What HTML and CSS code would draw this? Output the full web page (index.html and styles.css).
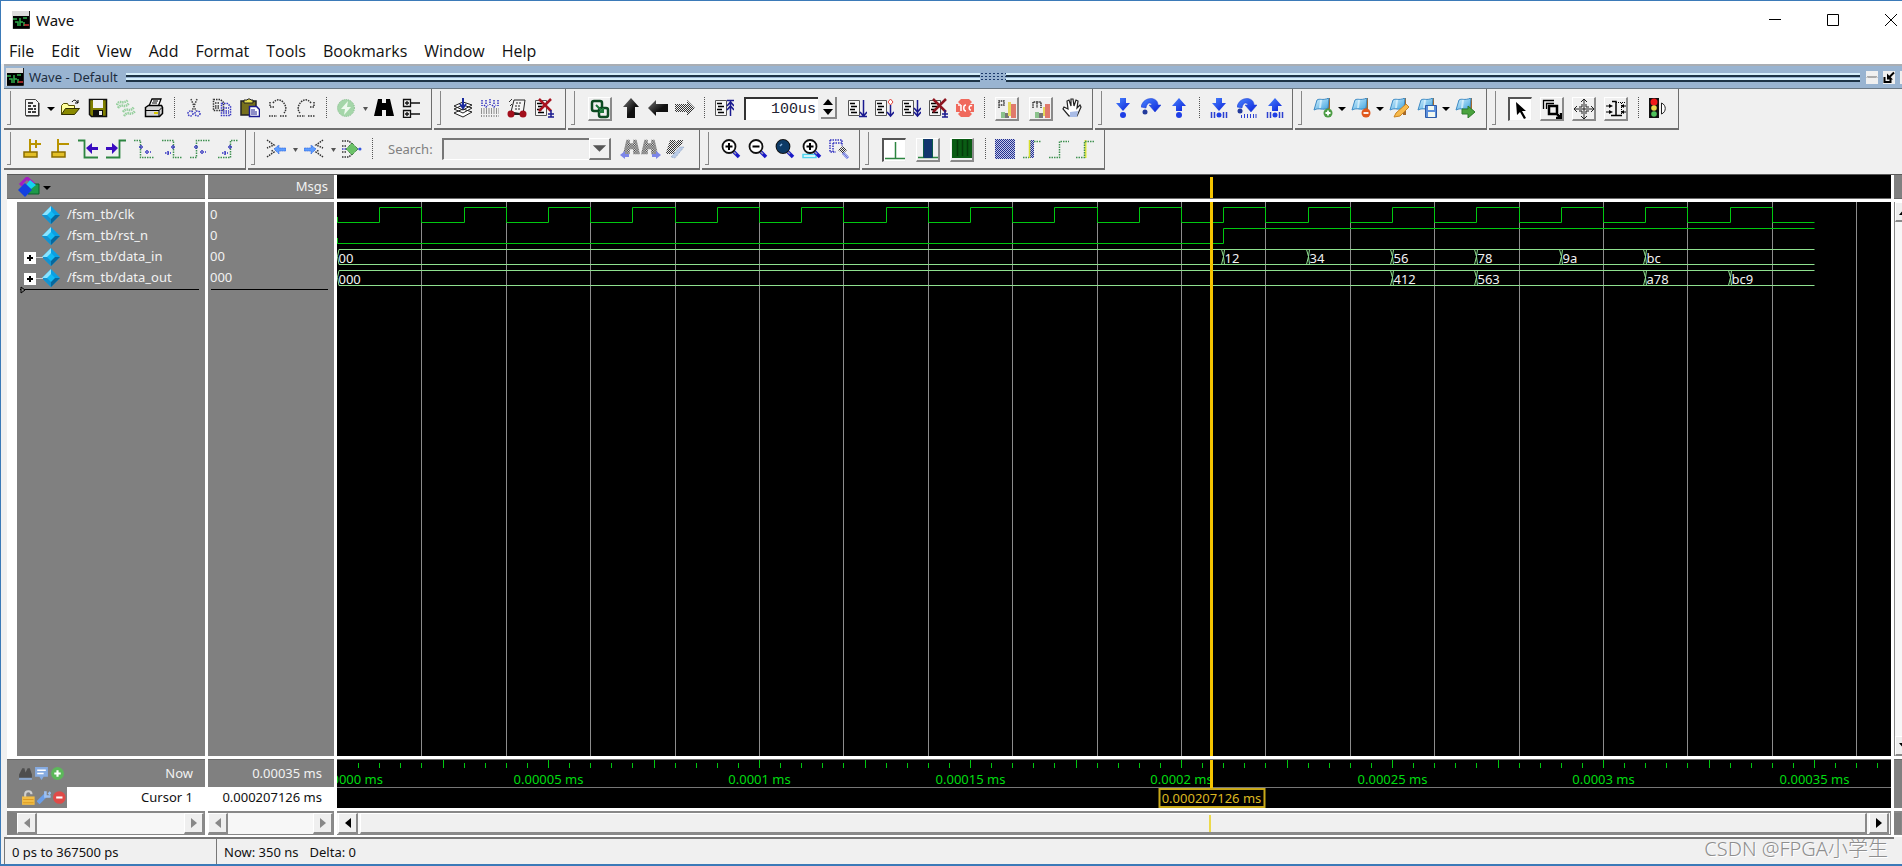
FILE: index.html
```html
<!DOCTYPE html>
<html lang="en">
<head>
<meta charset="utf-8">
<title>Wave</title>
<link rel="stylesheet" href="styles.css">
</head>
<body>
<svg class="defs" aria-hidden="true">
  <defs>
    <pattern id="dither" width="2" height="2" patternUnits="userSpaceOnUse"><rect width="2" height="2" fill="#efefef"/><rect width="1" height="1" fill="#333"/><rect x="1" y="1" width="1" height="1" fill="#333"/></pattern>
    <pattern id="ditherBlue" width="2" height="2" patternUnits="userSpaceOnUse"><rect width="2" height="2" fill="#c4c8ec"/><rect width="1" height="1" fill="#22308c"/><rect x="1" y="1" width="1" height="1" fill="#22308c"/></pattern>
    <linearGradient id="dark" x1="0" y1="0" x2="1" y2="1"><stop offset="0" stop-color="#777"/><stop offset=".6" stop-color="#111"/></linearGradient>
    <linearGradient id="blue" x1="0" y1="0" x2="1" y2="1"><stop offset="0" stop-color="#4a86ff"/><stop offset="1" stop-color="#0a20d8"/></linearGradient>
    <linearGradient id="sky" x1="0" y1="0" x2="1" y2="1"><stop offset="0" stop-color="#d6f2ff"/><stop offset="1" stop-color="#3fa3de"/></linearGradient>
    <symbol id="app" viewBox="0 0 18 18"><rect width="18" height="18" fill="#dcdcdc"/><rect x="1" y="5" width="16" height="12" fill="#000"/><path d="M17.500 0v17.500H1" fill="none" stroke="#222"/><path d="M1 8h4M3 11h3v4M8 15V7M8 11h3M11 7h4M12 11v4" fill="none" stroke="#2fae4c" stroke-width="1.500"/><path d="M12 14h5" stroke="#c33" stroke-width="1.500"/></symbol>
    <symbol id="page" viewBox="0 0 20 20"><path d="M1.500 2.500h11v15h-11z" fill="#f6f6f6" stroke="#555"/><path d="M3 5.500h5M4 8.500h6M3 11.500h5M4 14.500h6" stroke="#000" stroke-width="1.500"/></symbol>
    <symbol id="caret" viewBox="0 0 10 20"><path d="M1 9h8l-4 4z" fill="#000"/></symbol>
    <symbol id="caretSmall" viewBox="0 0 10 20"><path d="M3 9h5l-2.500 4z" fill="#555"/></symbol>
    <symbol id="down" viewBox="0 0 20 20"><path d="M7 0h6v5h4l-7 8-7-8h4z" fill="url(#blue)"/></symbol>
    <symbol id="up" viewBox="0 0 20 20"><path d="M7 13h6V8h4l-7-8-7 8h4z" fill="url(#blue)"/></symbol>
    <symbol id="over" viewBox="0 0 20 20"><path d="M0 9C2-2 17-2 17 7h3l-6 7-6-7h3C10 4 6 4 5 10z" fill="url(#blue)" stroke="#1b3ad0" stroke-width=".5"/></symbol>
    <symbol id="lens" viewBox="0 0 20 20"><path d="M12 12l6 6" stroke="#1a1ac8" stroke-width="3.500"/><path d="M12 12l3 3" stroke="#9a9ab0" stroke-width="1.500"/><circle cx="8" cy="7.500" r="6.500" fill="#fff" stroke="#111" stroke-width="1.800"/></symbol>
    <symbol id="flag" viewBox="0 0 20 20"><path d="M15.500 0v17" stroke="#a3692c" stroke-width="3"/><path d="M4 2c3-2 5 1 12-2l-1 10c-6 3-8-1-14 2z" fill="url(#sky)" stroke="#3d8ac4"/><path d="M8 2l-1 8" stroke="#e8f8ff" stroke-width="2" opacity=".7"/></symbol>
    <symbol id="binos" viewBox="0 0 20 20"><path d="M4 1h4v4h4V1h4l4 17h-8v-6H8v6H0z"/></symbol>
    <symbol id="gem" viewBox="0 0 18 18"><path d="M9 0l9 9-9 9-9-9z" fill="#0aa0e4"/><path d="M9 0v9H0z" fill="#8be4ff"/><path d="M0 9h9v9z" fill="#1592cf"/><path d="M18 9H9v9z" fill="#07679c"/><path d="M9 5l4 4-4 4-4-4z" fill="#10baf4"/></symbol>
    <symbol id="left" viewBox="0 0 12 14"><path d="M9 2v10L3 7z"/></symbol>
    <symbol id="right" viewBox="0 0 12 14"><path d="M3 2v10l6-5z"/></symbol>
  </defs>
</svg>

<div class="window">
  <header class="titlebar">
    <svg class="app-icon"><use href="#app"/></svg>
    <h1 class="title">Wave</h1>
    <div class="window-controls">
      <button aria-label="Minimize"><svg viewBox="0 0 14 14"><path d="M1 6.500h12"/></svg></button>
      <button aria-label="Maximize"><svg viewBox="0 0 14 14"><path d="M1.500 1.500h11v11h-11z"/></svg></button>
      <button aria-label="Close"><svg viewBox="0 0 14 14"><path d="M1 1l12 12M13 1L1 13"/></svg></button>
    </div>
  </header>

  <nav class="menubar">
    <button>File</button><button>Edit</button><button>View</button><button>Add</button><button>Format</button><button>Tools</button><button>Bookmarks</button><button>Window</button><button>Help</button>
  </nav>

  <div class="pane-title">
    <svg class="app-icon"><use href="#app"/></svg>
    <h2>Wave - Default</h2>
    <div class="rails"></div>
    <div class="rail-grip"></div>
    <div class="rails rails-end"></div>
    <button aria-label="Shade pane"><svg viewBox="0 0 12 12"><path d="M1 6l1-1 1 1 1-1 1 1 1-1 1 1 1-1 1 1 1-1 1 1" fill="none" stroke="#555"/></svg></button>
    <button aria-label="Dock pane"><svg viewBox="0 0 12 12"><path d="M1.500 5.500v5h6v-3M11 1L6 6" fill="none" stroke="#000" stroke-width="2"/><path d="M4 2v6h6z"/></svg></button>
    <button class="cut" aria-label="Close pane"></button>
  </div>

  <div class="toolbars">
    <div class="tool-row">
      <div class="group wide g-file">
        <button aria-label="New"><svg viewBox="0 0 20 20"><path d="M3.500 1.500h10l3 3v13h-13z" fill="#f6f6f6" stroke="#444"/><path d="M17 5v13H4" fill="none" stroke="#222"/><path d="M6 5h5M6 8h3M11 8h3M6 11h5M12 11h2M6 14h3M10 14h4" stroke="#000" stroke-width="1.300"/></svg></button>
        <button class="drop" aria-label="New options"><svg><use href="#caret"/></svg></button>
        <button aria-label="Open"><svg viewBox="0 0 20 20"><path d="M1.500 16.500v-9l2-2h4l1 2h6v3" fill="#ffff9c" stroke="#555000"/><path d="M1.500 16.500l4-6h14l-5 6z" fill="#8a8a00" stroke="#333000"/><path d="M12 4c2-3 4-2 6 1M15 5h3V2" fill="none" stroke="#000"/></svg></button>
        <button aria-label="Save"><svg viewBox="0 0 20 20"><path d="M1.500 1.500h17v17h-15l-2-2z" fill="#808000" stroke="#111" stroke-width="1.500"/><path d="M5 2h10v8H5z" fill="#f4f4f4"/><path d="M5 12h10v6H5z" fill="#111"/><path d="M11 13h3v4h-3z" fill="#eee"/></svg></button>
        <button aria-label="Reload"><svg viewBox="0 0 20 20"><path d="M1 7C3 1 7 7 12 2M2 10c4-6 6 2 11-5M7 14c4-6 6 2 11-5M8 18c4-6 6 1 11-5" fill="none" stroke="#95cf9d" stroke-width="2.500" stroke-dasharray="1.500 .7"/></svg></button>
        <button aria-label="Print"><svg viewBox="0 0 20 20"><path d="M5 8l3-7h9l-3 8" fill="#fff" stroke="#000" stroke-width="1.300"/><path d="M1.500 9.500l3-2h13l1 2v6l-3 3h-14z" fill="#d6d6d6" stroke="#000" stroke-width="1.500"/><path d="M2 12.500h13l3-3M15 12v6" fill="none" stroke="#000"/><path d="M9 3h5M8 5h5" stroke="#000"/><path d="M10 15h4" stroke="#d8c800" stroke-width="2"/></svg></button>
        <span class="sep"></span>
        <button aria-label="Cut"><svg viewBox="0 0 20 20"><path d="M7 1l5 12M13 1L8 13" fill="none" stroke="#444" stroke-width="1.500" stroke-dasharray="1.500 1"/><circle cx="6.500" cy="15.500" r="2.500" class="dash-blue"/><circle cx="13.500" cy="15.500" r="2.500" class="dash-blue"/></svg></button>
        <button aria-label="Copy"><svg viewBox="0 0 20 20"><path d="M1.500 1.500h7l3 3v8h-10zM3 5h5M3 8h5M3 10h5" class="dash-dark"/><path d="M9.500 5.500h6l3 3v9h-9zM11 10h6M11 13h6M11 15h6" class="dash-blue"/></svg></button>
        <button aria-label="Paste"><svg viewBox="0 0 20 20"><path d="M1 3h15v14H1z" fill="#77701c" stroke="#222" stroke-width="1.500"/><path d="M4 5V2h3l1-1h2l1 1h2v3z" fill="#e8e050" stroke="#222"/><path d="M9.500 8.500h7l3 3v7h-10z" fill="#fff" stroke="#1a1a90" stroke-width="1.500"/><path d="M11 12h4M11 14h6M11 16h6" stroke="#1a1a90"/></svg></button>
        <button aria-label="Undo"><svg viewBox="0 0 20 20"><path d="M2 4v5h5M5 5C8 1 12 1 15 4s4 8 1 11M1 18h8M12 18h7" class="dash-dark"/></svg></button>
        <button aria-label="Redo"><svg viewBox="0 0 20 20"><path d="M18 4v5h-5M15 5C12 1 8 1 5 4s-4 8-1 11M1 18h8M12 18h7" class="dash-dark"/></svg></button>
        <span class="sep"></span>
        <button aria-label="Compile"><svg viewBox="0 0 20 20"><circle cx="10" cy="10" r="8.500" fill="#a5d6a9" stroke="#83bd8a" stroke-dasharray="1 1"/><path d="M12 3L5 11h4l-1 6 7-8h-4z" fill="#effaef"/></svg></button>
        <button class="drop" aria-label="Compile options"><svg><use href="#caretSmall"/></svg></button>
        <button aria-label="Find"><svg><use href="#binos"/></svg></button>
        <button aria-label="Collapse tree"><svg viewBox="0 0 20 20"><path d="M1.500 1.500h7v7h-7zM1.500 12.500h7v7h-7zM8 5h10M8 16h10M3 5h4M5 3v4M3 16h4M5 14v4" fill="none" stroke="#111" stroke-width="1.300"/></svg></button>
      </div>
      <div class="group g-lib">
        <button aria-label="Load layers"><svg viewBox="0 0 20 20"><path d="M1 15l9-4 9 3-9 5zM1 11l9-4 9 3-9 5zM1 8l9-4 9 3-9 5z" fill="#fff" stroke="#222"/><path d="M10 0v9M7 6l3 4 3-4" stroke="#1a2a9c" fill="none" stroke-width="2"/></svg></button>
        <button aria-label="Simulate"><svg viewBox="0 0 20 20"><path d="M2 2v6M6 2v5M10 1v6M14 2v5M18 2v6M4 7l2 2 2-2M12 7l2 2 2-2" class="dash-blue"/><path d="M1 11h18M1 13h18M1 15h18M1 18h18" stroke="#333" stroke-dasharray="1 1.500" fill="none"/></svg></button>
        <button aria-label="Coverage"><svg viewBox="0 0 20 20"><path d="M4 14L7 2h11l-2 14z" fill="#f4f4f4" stroke="#222"/><path d="M9 5h6M8 8h6M8 11h5" stroke="#222" stroke-dasharray="2 1"/><path d="M2 4l3-3M3 8l2-2" stroke="#333"/><path d="M4 16h13" stroke="#222" stroke-width="2"/><circle cx="4" cy="16" r="3.500" fill="#a30f1c"/><circle cx="16" cy="16" r="3.500" fill="#a30f1c"/></svg></button>
        <button aria-label="End simulation"><svg viewBox="0 0 20 20"><use href="#page" width="20" height="20"/><path d="M5 1l12 12M17 1L5 13" stroke="#a81420" stroke-width="2.500"/><path d="M17 12v7M14 16h6M14 19h6" stroke="#1a1a90" stroke-width="1.500"/></svg></button>
      </div>
      <div class="group g-run">
        <button class="raised" aria-label="Environment"><svg viewBox="0 0 20 20"><rect x="2" y="2" width="10" height="10" rx="2" fill="none" stroke="#0d4a22" stroke-width="2.500"/><rect x="9" y="9" width="9" height="9" rx="2" fill="#efefef" stroke="#0d4a22" stroke-width="2.500"/><path d="M6 6l7 7M13 9v4H9" fill="none" stroke="#1f7a3c" stroke-width="2"/></svg></button>
        <button aria-label="Up"><svg viewBox="0 0 20 20"><path d="M10 0l8 9h-4v11H6V9H2z" fill="url(#dark)"/></svg></button>
        <button aria-label="Back"><svg viewBox="0 0 20 20"><path d="M0 10l8-8v4h12v8H8v4z" fill="url(#dark)"/></svg></button>
        <button aria-label="Forward"><svg viewBox="0 0 20 20"><path d="M20 10l-8-8v4H0v8h12v4z" fill="url(#dither)"/></svg></button>
        <span class="sep"></span>
        <button aria-label="Restart"><svg viewBox="0 0 20 20"><use href="#page" width="20" height="20"/><path d="M16.500 2v16M13 2.500h7M13 8l3.500-4L20 8M13 12l3.500-4 3.500 4" fill="none" stroke="#1a1a90" stroke-width="1.500"/></svg></button>
        <input class="run-length" type="text" value="100us" aria-label="Run length">
        <span class="spinner"><button aria-label="Increase"><svg viewBox="0 0 14 9"><path d="M2 8h10L7 2z"/></svg></button><button aria-label="Decrease"><svg viewBox="0 0 14 9"><path d="M2 2h10L7 8z"/></svg></button></span>
        <button aria-label="Run"><svg viewBox="0 0 20 20"><use href="#page" width="20" height="20"/><path d="M16.500 2v16M13 14l3.500 4 3.500-4M12 18.500h8" fill="none" stroke="#1a1a90" stroke-width="1.500"/></svg></button>
        <button aria-label="Continue run"><svg viewBox="0 0 20 20"><use href="#page" width="20" height="20"/><path d="M16.500 7v11M13 14l3.500 4 3.500-4" fill="none" stroke="#1a1a90" stroke-width="1.500"/><path d="M16.500 1l2.500 3-2.500 3L14 4z" fill="#fff" stroke="#e0453a"/></svg></button>
        <button aria-label="Run all"><svg viewBox="0 0 20 20"><use href="#page" width="20" height="20"/><path d="M16.500 2v16M13 10l3.500 4 3.500-4M13 14l3.500 4 3.500-4" fill="none" stroke="#1a1a90" stroke-width="1.500"/></svg></button>
        <button aria-label="Break"><svg viewBox="0 0 20 20"><use href="#page" width="20" height="20"/><path d="M5 1l13 13M18 1L5 14" stroke="#8e1520" stroke-width="2.500"/><path d="M17 12v7M14 16h6M14 19h6" stroke="#1a1a90" stroke-width="1.500"/></svg></button>
        <button aria-label="Stop"><svg viewBox="0 0 20 20"><path d="M6 1h8l3 3-2 2h4v8h-4l2 2-3 3H6l-3-3 2-2H1V6h4L3 4z" fill="#f0695c"/><path d="M3 7h3M6 7v6M11 7c-3 0-3 6 0 6M17 8c-3-2-4 4-1 4" stroke="#fff" fill="none" stroke-width="1.500"/></svg></button>
        <span class="sep"></span>
        <button class="raised" aria-label="Profile performance"><svg viewBox="0 0 20 20"><path d="M2 9V2h5v4H2" fill="none" stroke="#333" stroke-width="1.500" stroke-dasharray="1.500 .7"/><path d="M4 19v-6h4v6z" fill="#8bc28c"/><path d="M8 19v-5h4v5z" fill="#777"/><path d="M11 17V3h3v14z" fill="#e5d95a"/><path d="M14 19V5h5v14z" fill="#e07a6c"/></svg></button>
        <button class="raised" aria-label="Profile memory"><svg viewBox="0 0 20 20"><path d="M2 9V3h4v6M6 3h4v6" fill="none" stroke="#333" stroke-width="1.500" stroke-dasharray="1.500 .7"/><path d="M4 19v-6h4v6z" fill="#8bc28c"/><path d="M8 19v-5h4v5z" fill="#777"/><path d="M12 17V8h2v9z" fill="#e5d95a"/><path d="M14 19V5h5v14z" fill="#e07a6c"/></svg></button>
        <button aria-label="Edit breakpoints"><svg viewBox="0 0 20 20"><path d="M7 18l-6-7 1-2 4 2-1-8 2-1 2 6V1h2l1 7 2-6 2 1-1 7 3-3 1 2-4 9z" fill="#fff" stroke="#222" stroke-width="1.200"/><path d="M8 19v-5l8-1-1 6z" fill="#a9bce6"/></svg></button>
      </div>
      <div class="group wide g-step">
        <button aria-label="Step into"><svg viewBox="0 0 20 20"><use href="#down" width="20" height="20"/><circle cx="10" cy="17" r="3" fill="#1f3fe6"/></svg></button>
        <button aria-label="Step over"><svg viewBox="0 0 20 20"><use href="#over" width="20" height="20"/><circle cx="4" cy="14" r="2.500" fill="#223a9c"/></svg></button>
        <button aria-label="Step out"><svg viewBox="0 0 20 20"><use href="#up" width="20" height="20"/><circle cx="10" cy="17" r="3" fill="#1f3fe6"/></svg></button>
        <span class="sep"></span>
        <button aria-label="Step into instance"><svg viewBox="0 0 20 20"><use href="#down" width="20" height="20"/><circle cx="10" cy="17" r="2.500" fill="#1f3fe6"/><path d="M2.500 14v6M5.500 14v6M14.500 14v6M17.500 14v6" stroke="#2b3fd0" stroke-width="1.500"/></svg></button>
        <button aria-label="Step over instance"><svg viewBox="0 0 20 20"><use href="#over" width="20" height="20"/><circle cx="3" cy="13" r="2.500" fill="#223a9c"/><path d="M4.500 17v3M7.500 16v4M10.500 16v4M13.500 16v4M16.500 16v4M19 16v4" stroke="#2b3fd0"/></svg></button>
        <button aria-label="Step out instance"><svg viewBox="0 0 20 20"><use href="#up" width="20" height="20"/><circle cx="10" cy="17" r="2.500" fill="#1f3fe6"/><path d="M2.500 14v6M5.500 14v6M14.500 14v6M17.500 14v6" stroke="#2b3fd0" stroke-width="1.500"/></svg></button>
      </div>
      <div class="group wide g-mark">
        <button aria-label="Add bookmark"><svg viewBox="0 0 20 20"><use href="#flag" width="20" height="20"/><circle cx="15" cy="15" r="4.500" fill="#4c9c44"/><path d="M12.500 15h5M15 12.500v5" stroke="#fff" stroke-width="1.800"/></svg></button>
        <button class="drop" aria-label="Add bookmark options"><svg><use href="#caret"/></svg></button>
        <button aria-label="Delete bookmark"><svg viewBox="0 0 20 20"><use href="#flag" width="20" height="20"/><circle cx="15" cy="15" r="4.500" fill="#e0581c"/><path d="M12.500 15h5" stroke="#fff" stroke-width="1.800"/></svg></button>
        <button class="drop" aria-label="Delete bookmark options"><svg><use href="#caret"/></svg></button>
        <button aria-label="Edit bookmarks"><svg viewBox="0 0 20 20"><use href="#flag" width="20" height="20"/><path d="M17 6l3 3-9 9-6 1 2-4z" fill="#f7ba4c" stroke="#c98422"/></svg></button>
        <button aria-label="Save bookmarks"><svg viewBox="0 0 20 20"><use href="#flag" width="20" height="20"/><path d="M8.500 7.500h11v12h-11z" fill="#5b8edb" stroke="#2d5ca8"/><path d="M11 8h6v4h-6zM11 14h7v5h-7z" fill="#f2f8f0"/></svg></button>
        <button class="drop" aria-label="Save bookmark options"><svg><use href="#caret"/></svg></button>
        <button aria-label="Next bookmark"><svg viewBox="0 0 20 20"><use href="#flag" width="20" height="20"/><path d="M7 11h6V8l7 6-7 6v-4H7z" fill="#4aa33e" stroke="#2f7d2c"/></svg></button>
      </div>
      <div class="group g-modes">
        <button class="raised sunken" aria-label="Select mode"><svg viewBox="0 0 20 20"><path d="M5 2l10 9h-4l4 7-2 1-4-7-3 3z"/></svg></button>
        <button class="raised" aria-label="Zoom mode"><svg viewBox="0 0 20 20"><path d="M1.500 10V1.500H12M4.500 10V4.500H12" fill="none" stroke="#000" stroke-width="1.300"/><path d="M7 7h8v8H7zM14 14l5 5M19 14v5h-5" fill="none" stroke="#000" stroke-width="2.500"/></svg></button>
        <button class="raised" aria-label="Pan mode"><svg viewBox="0 0 20 20"><path d="M10 0v20M0 10h20M7 3l3-3 3 3M7 17l3 3 3-3M3 7l-3 3 3 3M17 7l3 3-3 3M8 5v3H5M12 5v3h3M8 15v-3H5M12 15v-3h3" fill="none" stroke="#222"/></svg></button>
        <button class="raised" aria-label="Edit mode"><svg viewBox="0 0 20 20"><path d="M6 2.500h4v14H5M10 16.500h6" fill="none" stroke="#000" stroke-width="1.500"/><path d="M10 3.500h9M15.500 4v12" fill="none" stroke="#000" stroke-dasharray="1 1"/><path d="M0 7h4M0 13h4M15 7h5M15 13h5" stroke="#000"/><path d="M3 5l4 2-4 2zM3 11l4 2-4 2zM18 5v4l-3-2zM18 11v4l-3-2z"/></svg></button>
        <span class="sep"></span>
        <button aria-label="Stop drawing"><svg viewBox="0 0 20 20"><rect x="1" y="0" width="10" height="20" fill="#111"/><circle cx="6" cy="4" r="3.500" fill="#f01a1a"/><circle cx="6" cy="10" r="2.800" fill="#e8d84c"/><circle cx="6" cy="16" r="2.800" fill="#4fc25c"/><path d="M13.500 5c5 2 5 9 0 11z" fill="#fff" stroke="#222"/></svg></button>
      </div>
    </div>

    <div class="tool-row">
      <div class="group wide g-cursor">
        <button aria-label="Insert cursor"><svg viewBox="0 0 20 20"><path d="M8 0v13M8 5h11M14 1v8" stroke="#b99400" stroke-width="2" fill="none"/><path d="M2 13h13v5H2z" fill="#e3bf28" stroke="#8a6d00" stroke-width="1.500"/></svg></button>
        <button aria-label="Delete cursor"><svg viewBox="0 0 20 20"><path d="M8 0v13M8 5h11" stroke="#b99400" stroke-width="2" fill="none"/><path d="M2 13h13v5H2z" fill="#e3bf28" stroke="#8a6d00" stroke-width="1.500"/></svg></button>
        <button aria-label="Previous transition"><svg viewBox="0 0 20 20"><path d="M0 1.500h6.500v17H20" fill="none" stroke="#2c8540" stroke-width="1.800"/><path d="M8 9l6-5v4h6v3h-6v4z" fill="#3a0cc0"/></svg></button>
        <button aria-label="Next transition"><svg viewBox="0 0 20 20"><path d="M0 18.500h13.500v-17H20" fill="none" stroke="#2c8540" stroke-width="1.800"/><path d="M12 9L6 4v4H0v3h6v4z" fill="#3a0cc0"/></svg></button>
        <button aria-label="Previous falling edge"><svg viewBox="0 0 20 20"><path d="M0 1.500h6.500v17H20" class="dash-green"/><path d="M5 8h4M7 6v5M11 13h6M13 11v4" class="dash-blue"/></svg></button>
        <button aria-label="Next falling edge"><svg viewBox="0 0 20 20"><path d="M0 1.500h11.500v17H20" class="dash-green"/><path d="M9 8h5M11 6v5M3 14h6M6 12v4" class="dash-blue"/></svg></button>
        <button aria-label="Previous rising edge"><svg viewBox="0 0 20 20"><path d="M0 18.500h6.500v-17H20" class="dash-green"/><path d="M4 8h5M6 6v5M10 13h6M12 11v4" class="dash-blue"/></svg></button>
        <button aria-label="Next rising edge"><svg viewBox="0 0 20 20"><path d="M0 18.500h12.500v-17H20" class="dash-green"/><path d="M10 8h5M12 6v5M4 14h6M7 12v4" class="dash-blue"/></svg></button>
      </div>
      <div class="group wide g-search">
        <button aria-label="Expand previous"><svg viewBox="0 0 20 20"><path d="M1 1l7 5-7 3M1 18l7-5-3-2" class="dash-dark"/><path d="M8 10l5-4v3h7v3h-7v3z" fill="#5c9cff" stroke="#2e62d8" stroke-dasharray="1 1"/></svg></button>
        <button class="drop" aria-label="Expand previous options"><svg><use href="#caretSmall"/></svg></button>
        <button aria-label="Expand next"><svg viewBox="0 0 20 20"><path d="M19 1l-7 5 7 3M19 18l-7-5 3-2" class="dash-dark"/><path d="M12 10L7 6v3H0v3h7v3z" fill="#5c9cff" stroke="#2e62d8" stroke-dasharray="1 1"/></svg></button>
        <button class="drop" aria-label="Expand next options"><svg><use href="#caretSmall"/></svg></button>
        <button aria-label="Show drivers"><svg viewBox="0 0 20 20"><path d="M0 2h7l4 4M0 18h7l4-4M0 7h4M0 13h4" class="dash-dark"/><path d="M0 10h20" class="dash-blue"/><path d="M10 4l6 6-6 6-6-6z" fill="#6cc268" stroke="#25682a" stroke-dasharray="1 1"/><circle cx="18" cy="10" r="1.500" fill="#3456e0"/></svg></button>
        <span class="sep"></span>
        <label class="search-label" for="search">Search:</label>
        <input class="search-box" id="search" type="text">
        <button class="combo" aria-label="Search history"><svg viewBox="0 0 20 20"><path d="M3 7h14l-7 7z" fill="#555"/></svg></button>
        <button class="slim" aria-label="Find previous"><svg viewBox="0 0 20 20"><use href="#binos" width="17" height="17" x="3" fill="url(#dither)"/><path d="M0 16l5-4v3h4v3H5v2z" fill="#7c86e8"/></svg></button>
        <button class="slim" aria-label="Find next"><svg viewBox="0 0 20 20"><use href="#binos" width="17" height="17" fill="url(#dither)"/><path d="M20 16l-5-4v3h-4v3h4v2z" fill="#7c86e8"/></svg></button>
        <button aria-label="Search options"><svg viewBox="0 0 20 20"><path d="M1 14L5 1h6l-1 4 3-4h5l-1 4-6 5-2 5H1z" fill="url(#dither)"/><path d="M6 18l9-10h4l-9 11z" fill="#b9cbe6" stroke="#8fa4c4" stroke-dasharray="1 1"/></svg></button>
      </div>
      <div class="group g-zoom">
        <button aria-label="Zoom in"><svg viewBox="0 0 20 20"><use href="#lens" width="20" height="20"/><path d="M4.500 7.500h7M8 4v7" stroke="#000" stroke-width="2"/></svg></button>
        <button aria-label="Zoom out"><svg viewBox="0 0 20 20"><use href="#lens" width="20" height="20"/><path d="M4.500 7.500h7" stroke="#000" stroke-width="2"/></svg></button>
        <button aria-label="Zoom full"><svg viewBox="0 0 20 20"><use href="#lens" width="20" height="20"/><circle cx="8" cy="7.500" r="6.500" fill="#0d3a66"/><path d="M5 7l2-2" stroke="#8ab4dd" stroke-width="1.500"/></svg></button>
        <button aria-label="Zoom in on cursor"><svg viewBox="0 0 20 20"><path d="M1 15.500h13v3H1z" fill="#fff" stroke="#4fd4ee" stroke-width="1.500"/><use href="#lens" width="20" height="20"/><path d="M4.500 7.500h7M8 4v7" stroke="#000" stroke-width="2"/></svg></button>
        <button aria-label="Zoom between cursors"><svg viewBox="0 0 20 20"><path d="M1 1h12v6M1 1v12h6M4 4h9M4 4v9" class="dash-blue"/><path d="M9 11l5-4 4 4-4 4z" fill="url(#dither)"/><path d="M14 14l5 5" stroke="#5d6ae0" stroke-width="3" stroke-dasharray="1 .5"/></svg></button>
      </div>
      <div class="group g-edges">
        <button class="raised sunken" aria-label="Event mode"><svg viewBox="0 0 20 20"><path d="M0 18.500h20M10.500 2v16" stroke="#2c8540" stroke-width="1.500"/></svg></button>
        <button class="raised" aria-label="Delta mode"><svg viewBox="0 0 20 20"><path d="M0 18.500h20" stroke="#2c8540" stroke-width="1.500"/><path d="M5 0h10v19H5z" fill="#12366e"/><path d="M5.500 0v19M14.500 0v19" stroke="#0c5a4a"/></svg></button>
        <button class="raised" aria-label="Expanded mode"><svg viewBox="0 0 20 20"><path d="M0 0h20v19H0z" fill="#0a5c14"/><path d="M5.500 1v16M10.500 1v16M15.500 1v16" stroke="#063a0b" stroke-width="1.500"/></svg></button>
        <span class="sep"></span>
        <button aria-label="Expand all time"><svg viewBox="0 0 20 20"><path d="M0 0h20v20H0z" fill="url(#ditherBlue)"/></svg></button>
        <button aria-label="Expand at cursor"><svg viewBox="0 0 20 20"><path d="M1 18.500h6M12 2.500h7" class="dash-green"/><path d="M7 1h5v18H7z" fill="url(#ditherBlue)"/><path d="M7.500 1v18" stroke="#d7df2c" stroke-width="1.500"/></svg></button>
        <button aria-label="Collapse all time"><svg viewBox="0 0 20 20"><path d="M0 18.500h10.500v-16H20" class="dash-green"/></svg></button>
        <button aria-label="Collapse at cursor"><svg viewBox="0 0 20 20"><path d="M9.500 1v18" stroke="#e2e83c" stroke-width="2"/><path d="M0 18.500h8.500v-16H19" class="dash-green"/></svg></button>
      </div>
    </div>
  </div>

  <main class="panes">
    <section class="col names">
      <div class="head"><button class="objects" aria-label="Object filter"><svg viewBox="0 0 22 20"><path d="M3 7l6-6 6 5-6 6z" fill="none" stroke="#a21fc0" stroke-width="3"/><path d="M10 7h11v10H10z" fill="#1e9a4a" stroke="#0c5e2a"/><path d="M12 3l6 5-5 4-5-4z" fill="#16d2ee"/><path d="M7 6l7 7-7 7-7-7z" fill="#1440e0"/></svg><svg class="tri"><use href="#caret"/></svg></button></div>
      <div class="body">
        <ul class="signals">
          <li><svg class="gem"><use href="#gem"/></svg>/fsm_tb/clk</li>
          <li><svg class="gem"><use href="#gem"/></svg>/fsm_tb/rst_n</li>
          <li class="bus"><button class="plus" aria-label="Expand data_in"></button><svg class="gem"><use href="#gem"/></svg>/fsm_tb/data_in</li>
          <li class="bus"><button class="plus" aria-label="Expand data_out"></button><svg class="gem"><use href="#gem"/></svg>/fsm_tb/data_out</li>
        </ul>
        <div class="insert"><svg viewBox="0 0 6 8"><path d="M1 1l4 3-4 3z" fill="#808080" stroke="#000"/></svg></div>
      </div>
      <div class="time">
        <div class="time-row now">
          <span class="tools">
            <svg viewBox="0 0 14 14"><path d="M1 8l3-6h2l1 4 2-4h2l2 6v4H1z" fill="#4e4e4e"/><path d="M1 12h12" stroke="#8aa6cc" stroke-width="2"/></svg><svg viewBox="0 0 14 14"><path d="M1 1h12v9H9l-2 3-2-3H1z" fill="#86abe0"/><path d="M3 4h8M3 7h6" stroke="#fff" stroke-width="1.500"/></svg><svg viewBox="0 0 14 14"><circle cx="7" cy="7" r="6" fill="#5cb85a"/><path d="M4 7h6M7 4v6" stroke="#fff" stroke-width="2"/></svg>
          </span><span>Now</span></div>
        <div class="time-row cursor">
          <span class="tools">
            <svg viewBox="0 0 14 14"><path d="M4 7V4c0-4 6-4 6 0" fill="none" stroke="#d0d0d0" stroke-width="2"/><path d="M1 6h12v8H1z" fill="#f2bd45"/><path d="M2 9h10M2 12h10" stroke="#dc9a22"/></svg><svg viewBox="0 0 14 14"><path d="M1 12l7-7" stroke="#6a9ee8" stroke-width="4"/><path d="M8 1v5h5M13 2l-2 2" fill="none" stroke="#9cc0f2" stroke-width="2.500"/></svg><svg viewBox="0 0 14 14"><circle cx="7" cy="7" r="6" fill="#e04a48"/><path d="M4 7h6" stroke="#fff" stroke-width="2"/></svg>
          </span><span class="field">Cursor 1</span></div>
      </div>
      <div class="scroll"><button aria-label="Scroll names left"><svg><use href="#left"/></svg></button><span class="track"></span><button aria-label="Scroll names right"><svg><use href="#right"/></svg></button></div>
    </section>

    <section class="col values">
      <div class="head">Msgs</div>
      <div class="body">
        <ul class="signals"><li>0</li><li>0</li><li>00</li><li>000</li></ul>
        <div class="insert"></div>
      </div>
      <div class="time">
        <div class="time-row now"><span>0.00035 ms</span></div>
        <div class="time-row cursor"><span class="field">0.000207126 ms</span></div>
      </div>
      <div class="scroll"><button aria-label="Scroll values left"><svg><use href="#left"/></svg></button><span class="track"></span><button aria-label="Scroll values right"><svg><use href="#right"/></svg></button></div>
    </section>

    <section class="col wave">
      <div class="head"><svg id="wave-head"></svg></div>
      <div class="body"><svg id="wave-body"></svg></div>
      <div class="time"><svg id="wave-time"></svg></div>
      <div class="scroll live"><button aria-label="Scroll wave left"><svg><use href="#left"/></svg></button><span class="thumb"><i class="mark"></i></span><button aria-label="Scroll wave right"><svg><use href="#right"/></svg></button></div>
    </section>

    <section class="col edge">
      <div class="head"></div>
      <div class="body"><button aria-label="Scroll up"><svg viewBox="0 0 16 16"><path d="M3 11h10L8 5z"/></svg></button><button aria-label="Scroll down"><svg viewBox="0 0 16 16"><path d="M3 5h10l-5 6z"/></svg></button></div>
      <div class="time"></div>
      <div class="scroll"></div>
    </section>
  </main>

  <footer class="status">
    <span class="cell range">0 ps to 367500 ps</span>
    <span class="cell now-cell"><span>Now: 350 ns</span><span>Delta: 0</span></span>
  </footer>
  <div class="watermark">CSDN @FPGA小学生</div>
</div>
<script src="wave.js"></script>
</body>
</html>
```
FILE: styles.css
```css
* { box-sizing: border-box; }
body {
  margin: 0;
  font-family: "Noto Sans", "Open Sans", sans-serif;
  font-size: 13px;
  color: #111;
}
h1, h2, ul { margin: 0; padding: 0; font-size: 13px; font-weight: 400; list-style: none; }
button { border: 0; padding: 0; background: none; font: inherit; color: inherit; }
.defs { position: absolute; width: 0; height: 0; }

.window {
  position: relative;
  display: flex;
  flex-direction: column;
  height: 100vh;
  overflow: hidden;
  background: #f0f0f0;
  border: 1px solid #3b7ab8;
  border-width: 1px 0 2px 1px;
}

/* Title and menus */
.titlebar { display: flex; align-items: center; height: 37px; padding-left: 11px; background: #fff; flex: none; }
.app-icon { width: 18px; height: 18px; flex: none; }
.title { margin-left: 6px; font-size: 15px; }
.window-controls { display: flex; gap: 44px; margin-left: auto; padding-right: 4px; }
.window-controls button { display: flex; }
.window-controls svg { width: 14px; height: 14px; fill: none; stroke: #000; }
.menubar { display: flex; align-items: center; gap: 17px; height: 26px; padding-left: 8px; background: #fff; font-family: "Open Sans", "Noto Sans", sans-serif; font-size: 16px; flex: none; }

.pane-title {
  display: flex;
  align-items: center;
  height: 25px;
  margin-left: 3px;
  padding-left: 2px;
  background: #99b4d1;
  border-top: 2px solid #a9aeb4;
  border-bottom: 1px solid #6a7884;
  flex: none;
}
.pane-title h2 { margin: 0 8px 0 5px; white-space: nowrap; color: #1c2c3e; }
.rails { flex: 853; height: 9px; background: linear-gradient(#d6effb 0 2px, #1d3346 2px 4px, #99b4d1 4px 5px, #d6effb 5px 7px, #1d3346 7px 9px); }
.rails-end { margin-right: 6px; }
.rail-grip { width: 26px; height: 10px; background: radial-gradient(#1d3b6c 1px, transparent 1px) 0 0 / 4px 3px; }
.pane-title button { display: flex; width: 12px; height: 13px; margin-right: 5px; background: #f0f0f0; overflow: hidden; }
.pane-title button.cut { width: 2px; margin: 0; }

/* Toolbars */
.toolbars { margin-left: 3px; height: 85px; flex: none; }
.tool-row { display: flex; gap: 2px; height: 41px; }
.tool-row + .tool-row { height: 40px; }
.group {
  position: relative;
  display: flex;
  align-items: center;
  padding: 0 7px 1px 15px;
  border: 1px solid #6e6e6e;
  border-width: 0 1px 2px 0;
  flex: none;
}
.group::before {
  content: "";
  position: absolute;
  left: 3px;
  top: 2px;
  bottom: 3px;
  width: 3px;
  border: 1px solid #888;
  border-width: 0 1px 1px 0;
}
.group > button { display: flex; justify-content: center; align-items: center; width: 27px; }
.group.wide { padding-left: 14px; }
.group.wide > button { width: 28px; }
.group > button > svg { width: 20px; height: 20px; }
.group > button.drop { width: 10px; }
.group > button.drop > svg { width: 10px; }
.group.wide > button.drop { width: 10px; }
.group.wide > button.slim { width: 21px; }
.group > button.raised {
  width: 24px;
  height: 24px;
  margin: 2px 5px 0;
  border: 1px solid #fff;
  border-width: 1px 2px 2px 1px;
  border-right-color: #8a8a8a;
  border-bottom-color: #8a8a8a;
}
.group > button.sunken { background: #fff; border-width: 2px 1px 1px 2px; border-color: #555 #eee #eee #555; }
.g-modes > button.raised { margin: 2px 4px 0; }
.sep { width: 12px; height: 22px; background: repeating-linear-gradient(#555 0 1px, transparent 1px 2px) center / 1px 100% no-repeat; }
.g-file, .g-edges { padding-right: 5px; }
.group.g-step, .g-cursor { padding-right: 3px; }
.g-lib { padding-right: 8px; }
.g-search { padding-right: 10px; }

.dash-blue, .dash-dark, .dash-green { fill: none; stroke-width: 1.5; stroke-dasharray: 1.5 1; }
.dash-blue { stroke: #3434c0; }
.dash-dark { stroke: #333; }
.dash-green { stroke: #3f9150; }

.run-length {
  width: 74px;
  height: 23px;
  margin-left: 7px;
  padding: 0 2px;
  border: 1px solid #eee;
  border-width: 2px 0 0 2px;
  border-color: #333;
  background: #fff;
  font-family: "Liberation Mono", monospace;
  font-size: 15px;
  text-align: right;
  color: #223;
}
.spinner { display: flex; flex-direction: column; width: 16px; height: 22px; margin: 0 6px 0 3px; border: 1px solid #fff; border-width: 0 2px 2px 0; border-color: #888; }
.spinner button { display: flex; height: 10px; }
.spinner svg { width: 14px; height: 9px; }
.search-label { margin-left: 10px; width: 54px; color: #808080; }
.search-box { width: 147px; height: 22px; background: #efefef; border: 1px solid #fff; border-width: 2px 0 1px 2px; border-color: #777 #fff #fff #777; }
.group.wide > button.combo { width: 22px; height: 22px; margin-right: 8px; border: 1px solid #fff; border-width: 1px 2px 2px 1px; border-color: #fff #777 #777 #fff; }

/* Panes */
.panes { display: flex; flex: 1; min-height: 0; margin-left: 6px; border-top: 1px solid #5a5a5a; background: #fff; gap: 3px; }
.col { display: flex; flex-direction: column; gap: 3px; padding-bottom: 2px; flex: none; }
.head { height: 24px; background: #808080; border-bottom: 1px solid #6a6a6a; }
.body { flex: 1; min-height: 0; background: #808080; }
.time { height: 49px; background: #808080; border-top: 1px solid #6a6a6a; }
.scroll { display: flex; height: 24px; background: #f7f7f7; border: 1px solid #888; border-width: 2px 1px 1px 0; }
.names { width: 198px; }
.values { width: 126px; }
.wave { flex: 1; min-width: 0; }
.edge { width: 8px; overflow: hidden; }

.names .head { display: flex; align-items: center; padding-left: 11px; }
.objects { display: flex; align-items: center; }
.objects svg { width: 22px; height: 20px; }
.objects .tri { width: 10px; margin-left: 2px; }
.values .head { padding-right: 6px; text-align: right; line-height: 23px; color: #f2f2f2; }
.names .body { border-left: 10px solid #fff; }
.signals { padding-top: 2px; color: #f2f2f2; }
.signals li { display: flex; align-items: center; height: 21px; line-height: 21px; }
.names li { position: relative; padding-left: 25px; }
.gem { width: 18px; height: 18px; margin-right: 7px; }
.bus::before { content: ""; position: absolute; left: 18px; top: 11px; width: 8px; border-top: 1px solid #d0d0d0; }
.plus {
  position: absolute;
  left: 7px;
  top: 6px;
  width: 12px;
  height: 12px;
  background:
    linear-gradient(#000, #000) center / 6px 2px no-repeat,
    linear-gradient(#000, #000) center / 2px 6px no-repeat,
    #fff;
}
.values .signals { padding-left: 2px; }
.insert { display: flex; align-items: center; height: 1px; margin: 1px 6px 0 3px; background: #000; }
.insert svg { width: 6px; height: 8px; flex: none; overflow: visible; }

.time-row { display: flex; align-items: stretch; justify-content: flex-end; height: 27px; line-height: 27px; padding-right: 12px; color: #f2f2f2; }
.time-row.cursor { height: 21px; line-height: 21px; padding-right: 0; color: #111; }
.field { flex: 1; background: #fff; text-align: right; padding-right: 12px; }
.tools { display: flex; align-items: center; gap: 1px; width: 60px; padding-left: 11px; margin-right: auto; }
.cursor .tools { padding-left: 14px; }
.tools svg { width: 15px; height: 15px; }

.scroll button { display: flex; align-items: center; justify-content: center; width: 20px; background: #efefef; border: 1px solid #fff; border-width: 1px 2px 2px 1px; border-color: #fff #8a8a8a #8a8a8a #fff; }
.scroll svg { width: 12px; height: 14px; fill: #888; }
.names .scroll { border-left: 10px solid #808080; }
.track { flex: 1; }
.live { padding: 0 1px; gap: 2px; }
.live svg { fill: #000; }
.thumb { position: relative; flex: 1; background: #f0f0f0; border: 1px solid #fff; border-width: 1px 2px 2px 1px; border-color: #fff #8a8a8a #8a8a8a #fff; }
.mark { position: absolute; left: 56.4%; top: 1px; bottom: 0; width: 2px; background: #ecd94a; }

.wave .head, .wave .body, .wave .time { background: #000; overflow: hidden; }
.wave .head svg, .wave .body svg, .wave .time svg { display: block; width: 100%; height: 100%; }
.grid { stroke: #8c8c8c; }
.bit { fill: none; stroke: #00c810; }
.vec { fill: none; stroke: #8fe08f; }
.val { fill: #f2f2f2; }
.tick { stroke: #00c810; }
.stamp { fill: #00dc10; text-anchor: middle; }
.stamp-end { fill: #00dc10; text-anchor: end; }
.rule { stroke: #777; }
.cursor-line { stroke: #f5c400; stroke-width: 3; }
.cursor-box { fill: #000; stroke: #c8a818; stroke-width: 2; }
.cursor-text { fill: #dcb820; text-anchor: middle; }

.edge .body { display: flex; flex-direction: column; justify-content: space-between; background: #f7f7f7; border-left: 1px solid #888; }
.edge .body button { width: 18px; height: 20px; border: 1px solid #fff; border-bottom: 2px solid #888; background: #efefef; }
.edge .body svg { width: 16px; height: 16px; display: block; }
.edge .scroll { background: #808080; }

/* Status bar */
.status { display: flex; height: 27px; margin: 0 8px 0 3px; border-top: 2px solid #777; flex: none; }
.cell { display: flex; align-items: center; gap: 11px; padding-left: 7px; border-left: 1px solid #777; }
.range { width: 212px; }
.now-cell { flex: 1; }
.watermark {
  position: absolute;
  right: 14px;
  bottom: 1px;
  font-family: "Noto Sans", "Noto Sans CJK SC", sans-serif;
  font-size: 20px;
  font-weight: 300;
  line-height: 28px;
  color: #8e8e8e;
  text-shadow: 1px 1px #fff;
}
```
FILE: wave.js
```js
const NS = "http://www.w3.org/2000/svg";
const SCALE = 4.22; // pixels per nanosecond
const END = 350;
const CURSOR = 207.126;
const X = t => Math.round(t * SCALE) + 0.5;

function add(svg, tag, attrs, text) {
  const el = document.createElementNS(NS, tag);
  for (const k in attrs) el.setAttribute(k, attrs[k]);
  if (text) el.textContent = text;
  svg.appendChild(el);
}
const vline = (svg, cls, x, y1, y2) => add(svg, "line", { class: cls, x1: x, x2: x, y1, y2 });

const head = document.getElementById("wave-head");
const body = document.getElementById("wave-body");
const time = document.getElementById("wave-time");

for (let t = 20; t <= 360; t += 20) vline(body, "grid", X(t), 0, "100%");

// Clock: 20 ns period, low first
let d = `M.5 15V20.500`;
for (let t = 10; t < END; t += 20) d += `H${X(t)}V5.500H${X(t + 10)}V20.500`;
add(body, "path", { class: "bit", d: d + `H${X(END)}` });

// Reset is released at 210 ns
add(body, "path", { class: "bit", d: `M.5 36V41.500H${X(210)}V26.500H${X(END)}` });

function bus(top, items) {
  const bottom = top + 15;
  add(body, "path", { class: "vec", d: `M2 ${top}L.5 ${top + 7}L2 ${bottom}M2 ${top}H${X(END)}M2 ${bottom}H${X(END)}` });
  for (const [t, v] of items) {
    const x = X(t);
    if (t) add(body, "path", { class: "vec", d: `M${x - 2} ${top}L${x} ${top + 7}L${x - 2} ${bottom}M${x + 1} ${top}L${x} ${top + 7}L${x + 1} ${bottom}` });
    add(body, "text", { class: "val", x: x + 1, y: top + 13 }, v);
  }
}
bus(47.5, [[0, "00"], [210, "12"], [230, "34"], [250, "56"], [270, "78"], [290, "9a"], [310, "bc"]]);
bus(68.5, [[0, "000"], [250, "412"], [270, "563"], [310, "a78"], [330, "bc9"]]);

for (let t = 5; t <= 365; t += 5) vline(time, "tick", X(t), t % 25 ? 3 : 0, 8);
add(time, "text", { class: "stamp-end", x: 46, y: 24 }, "0000 ms");
for (const [t, s] of [[50, "0.00005 ms"], [100, "0.0001 ms"], [150, "0.00015 ms"], [200, "0.0002 ms"], [250, "0.00025 ms"], [300, "0.0003 ms"], [350, "0.00035 ms"]])
  add(time, "text", { class: "stamp", x: X(t), y: 24 }, s);
add(time, "line", { class: "rule", x1: 0, x2: "100%", y1: 27.5, y2: 27.5 });

vline(head, "cursor-line", X(CURSOR), 2, 24);
vline(body, "cursor-line", X(CURSOR), 0, "100%");
vline(time, "cursor-line", X(CURSOR), 0, 28);
add(time, "rect", { class: "cursor-box", x: X(CURSOR) - 52, y: 29, width: 105, height: 18 });
add(time, "text", { class: "cursor-text", x: X(CURSOR), y: 43 }, "0.000207126 ms");
```
